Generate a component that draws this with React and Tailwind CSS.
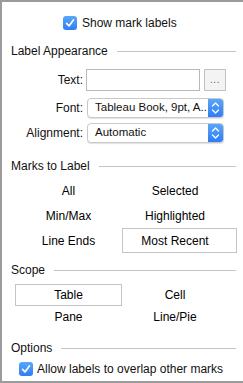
import React from "react";

const font = { fontFamily: '"Liberation Sans", Arial, sans-serif' };

function Check() {
  return (
    <div className="w-[14px] h-[14px] rounded-[3px] bg-gradient-to-b from-[#5aa6fa] to-[#2f7cf6] flex items-center justify-center shrink-0">
      <svg width="14" height="14" viewBox="0 0 14 14">
        <path d="M3.6 7.4 L6 9.9 L10.4 3.9" fill="none" stroke="white" strokeWidth="1.7" strokeLinecap="round" strokeLinejoin="round" />
      </svg>
    </div>
  );
}

function Header({ title }) {
  return (
    <div className="h-[16px] flex items-center pl-[9px] pr-[7px] gap-[9px]">
      <span className="text-[12px] text-[#111] whitespace-nowrap">{title}</span>
      <div className="flex-1 h-px bg-[#c4c4c4]" />
    </div>
  );
}

function Select({ text }) {
  return (
    <div className="w-[137px] h-[20px] flex rounded-[4px] border border-[#c9c9c9] bg-white shadow-[0_1px_1px_rgba(0,0,0,0.12)] overflow-hidden">
      <div className="flex-1 flex items-center pl-[7px] text-[11.5px] text-[#111] whitespace-nowrap">{text}</div>
      <div className="w-[15px] h-full bg-gradient-to-b from-[#5aa6fa] to-[#2f7cf6] flex items-center justify-center shrink-0">
        <svg width="9" height="14" viewBox="0 0 9 14">
          <path d="M1.5 5 L4.5 2 L7.5 5" fill="none" stroke="white" strokeWidth="1.3" strokeLinecap="round" strokeLinejoin="round" />
          <path d="M1.5 9 L4.5 12 L7.5 9" fill="none" stroke="white" strokeWidth="1.3" strokeLinecap="round" strokeLinejoin="round" />
        </svg>
      </div>
    </div>
  );
}

function Opt({ children, boxed, col }) {
  if (boxed) {
    return (
      <div className="h-full border border-[#c4c4c4] bg-white flex items-center justify-center text-[12px] text-black">
        <span className={col === 2 ? "pr-[9px]" : ""}>{children}</span>
      </div>
    );
  }
  return (
    <div className={"h-full flex items-center justify-center text-[12px] text-black " + (col === 2 ? "pr-[9px]" : "")}>
      {children}
    </div>
  );
}

export default function App() {
  return (
    <div style={font} className="w-[243px] h-[383px] bg-white border-l-2 border-t-2 border-b-2 border-[#9b9b9b] flex flex-col">
      <div className="mt-[14px] h-[14px] flex items-center pl-[61px] gap-[5px]">
        <Check />
        <span className="text-[12px] text-[#111]">Show mark labels</span>
      </div>

      <div className="mt-[13px]"><Header title="Label Appearance" /></div>

      <div className="mt-[10px] h-[22px] flex items-center">
        <div className="w-[81px] text-right text-[12px] text-[#111]">Text:</div>
        <div className="ml-[3px] w-[114px] h-[22px] border border-[#b9b9b9] bg-white" />
        <div className="ml-[4px] w-[22px] h-[22px] border border-[#c2c2c2] bg-[#f3f3f3] flex items-end justify-center pb-[5px]">
          <span className="text-[10px] leading-none text-[#666] tracking-[0.5px]">...</span>
        </div>
      </div>

      <div className="mt-[7px] h-[20px] flex items-center">
        <div className="w-[81px] text-right text-[12px] text-[#111]">Font:</div>
        <div className="ml-[4px]"><Select text="Tableau Book, 9pt, A.." /></div>
      </div>

      <div className="mt-[5px] h-[20px] flex items-center">
        <div className="w-[81px] text-right text-[12px] text-[#111]">Alignment:</div>
        <div className="ml-[4px]"><Select text="Automatic" /></div>
      </div>

      <div className="mt-[15px]"><Header title="Marks to Label" /></div>

      <div className="mt-[4px] pl-[13px] grid grid-cols-[107px_115px] auto-rows-[25px]">
        <Opt col={1}>All</Opt>
        <Opt col={2}>Selected</Opt>
        <Opt col={1}>Min/Max</Opt>
        <Opt col={2}>Highlighted</Opt>
        <Opt col={1}>Line Ends</Opt>
        <Opt col={2} boxed>Most Recent</Opt>
      </div>

      <div className="mt-[9px]"><Header title="Scope" /></div>

      <div className="mt-[6px] pl-[13px] grid grid-cols-[107px_115px] auto-rows-[22px]">
        <Opt col={1} boxed>Table</Opt>
        <Opt col={2}>Cell</Opt>
        <Opt col={1}>Pane</Opt>
        <Opt col={2}>Line/Pie</Opt>
      </div>

      <div className="mt-[12px]"><Header title="Options" /></div>

      <div className="mt-[6px] h-[14px] flex items-center pl-[17px] gap-[4px]">
        <Check />
        <span className="text-[12px] text-[#111] whitespace-nowrap">Allow labels to overlap other marks</span>
      </div>
    </div>
  );
}
